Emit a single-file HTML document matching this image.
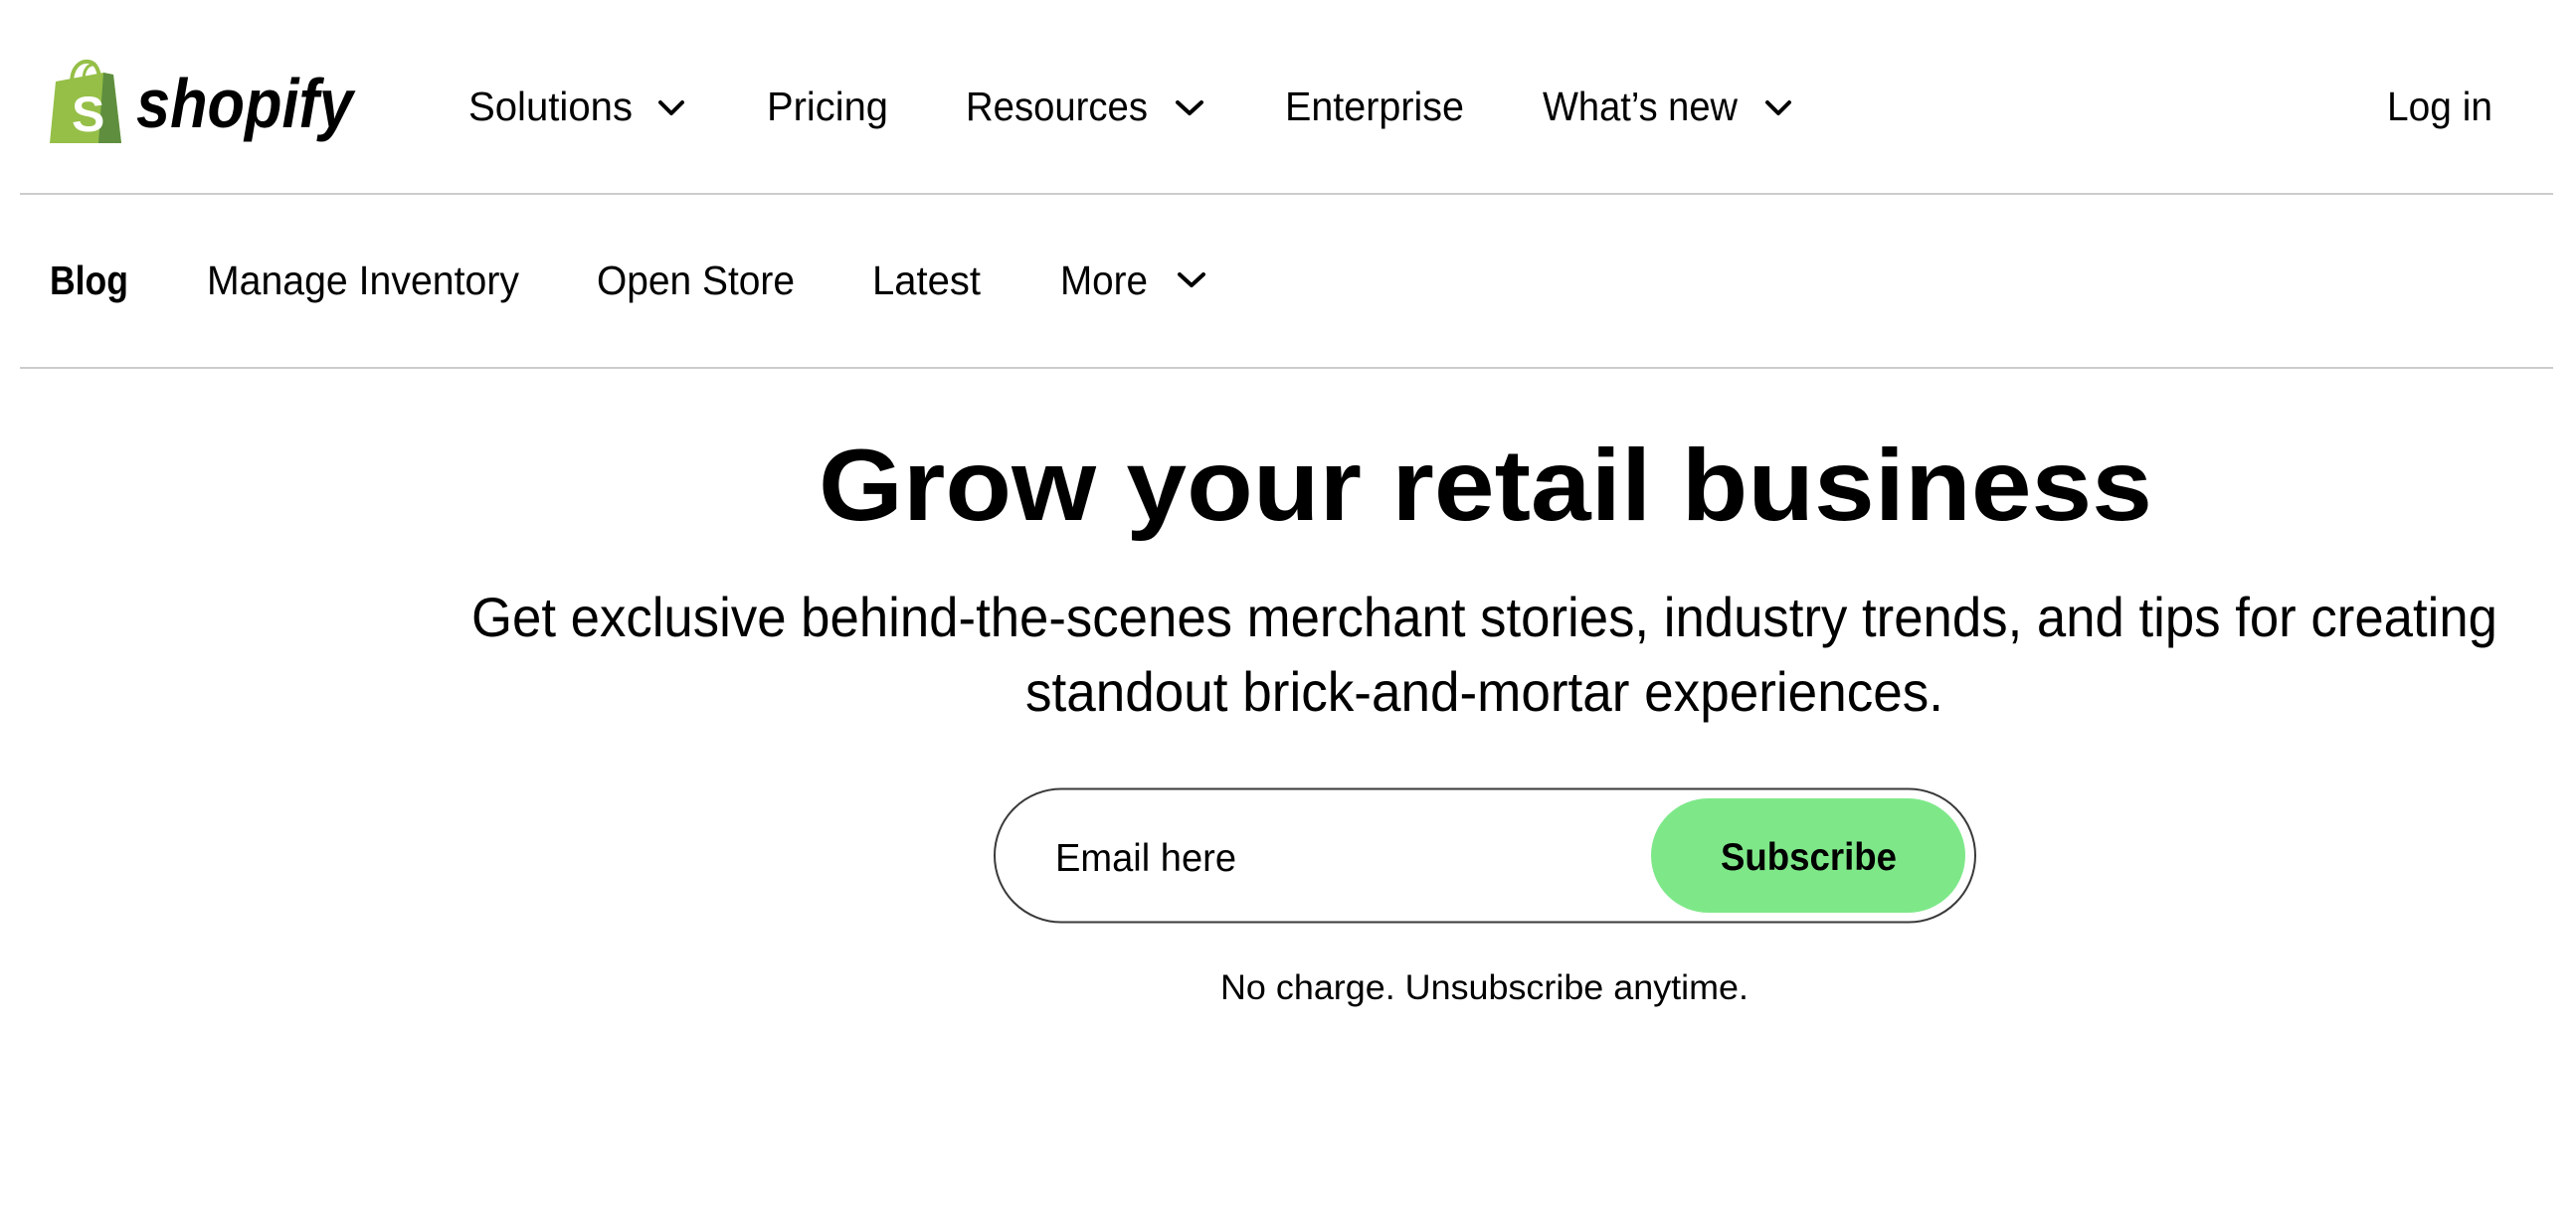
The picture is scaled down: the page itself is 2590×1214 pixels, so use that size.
<!DOCTYPE html>
<html><head><meta charset="utf-8"><style>
html,body{margin:0;padding:0;background:#fff;width:2590px;height:1214px;overflow:hidden}
svg{display:block}
text{font-family:"Liberation Sans",Arial,sans-serif;fill:#000}
</style></head><body>
<svg width="2590" height="1214" viewBox="0 0 2590 1214" xmlns="http://www.w3.org/2000/svg">
<!-- logo bag -->
<path d="M56 82 L104 73 L114 75 L122 144 L50 144 Z" fill="#95bf47"/>
<path d="M104 73 L114 75 L122 144 L99 144 Z" fill="#5e8e3e"/>
<path d="M72 84 C72 66 82 61 89 62 C97 63 100 72 100 81" fill="none" stroke="#95bf47" stroke-width="4"/>
<path d="M84 81 C84 68 90 64 96 65" fill="none" stroke="#95bf47" stroke-width="3"/>
<text x="72" y="132" font-size="50" font-weight="bold" style="fill:#fff">S</text>
<text x="137" y="128" font-size="70" font-weight="bold" font-style="italic" textLength="218" lengthAdjust="spacingAndGlyphs">shopify</text>

<!-- top nav -->
<g font-size="41">
<text x="471" y="121" textLength="165" lengthAdjust="spacingAndGlyphs">Solutions</text>
<text x="771" y="121" textLength="122" lengthAdjust="spacingAndGlyphs">Pricing</text>
<text x="971" y="121" textLength="183" lengthAdjust="spacingAndGlyphs">Resources</text>
<text x="1292" y="121" textLength="180" lengthAdjust="spacingAndGlyphs">Enterprise</text>
<text x="1551" y="121" textLength="196" lengthAdjust="spacingAndGlyphs">What’s new</text>
<text x="2400" y="121" textLength="106" lengthAdjust="spacingAndGlyphs">Log in</text>
</g>
<g fill="none" stroke="#000" stroke-width="4" stroke-linecap="round" stroke-linejoin="round">
<path d="M664 103 L675 114 L686 103"/>
<path d="M1184 103 L1196 114 L1208 103"/>
<path d="M1777 103 L1788 114 L1799 103"/>
<path d="M1186 276 L1198 287 L1210 276"/>
</g>
<rect x="20" y="194" width="2547" height="2" fill="#cccccc"/>

<!-- sub nav -->
<g font-size="41">
<text x="50" y="296" font-weight="bold" textLength="79" lengthAdjust="spacingAndGlyphs">Blog</text>
<text x="208" y="296" textLength="314" lengthAdjust="spacingAndGlyphs">Manage Inventory</text>
<text x="600" y="296" textLength="199" lengthAdjust="spacingAndGlyphs">Open Store</text>
<text x="877" y="296" textLength="109" lengthAdjust="spacingAndGlyphs">Latest</text>
<text x="1066" y="296" textLength="88" lengthAdjust="spacingAndGlyphs">More</text>
</g>
<rect x="20" y="369" width="2547" height="2" fill="#cccccc"/>

<!-- hero -->
<text x="823" y="523" font-size="102" font-weight="bold" textLength="1341" lengthAdjust="spacingAndGlyphs">Grow your retail business</text>
<text x="474" y="640" font-size="56" textLength="2037" lengthAdjust="spacingAndGlyphs">Get exclusive behind-the-scenes merchant stories, industry trends, and tips for creating</text>
<text x="1031" y="715" font-size="56" textLength="923" lengthAdjust="spacingAndGlyphs">standout brick-and-mortar experiences.</text>

<!-- form -->
<rect x="1000" y="793.5" width="986" height="134" rx="67" fill="#fff" stroke="#3a3a3a" stroke-width="2"/>
<rect x="1660" y="803" width="316" height="115" rx="57.5" fill="#7ee889"/>
<text x="1061" y="876" font-size="39" textLength="182" lengthAdjust="spacingAndGlyphs">Email here</text>
<text x="1730" y="875" font-size="39" font-weight="bold" textLength="177" lengthAdjust="spacingAndGlyphs">Subscribe</text>
<text x="1227" y="1005" font-size="35" textLength="531" lengthAdjust="spacingAndGlyphs">No charge. Unsubscribe anytime.</text>
</svg>
</body></html>
